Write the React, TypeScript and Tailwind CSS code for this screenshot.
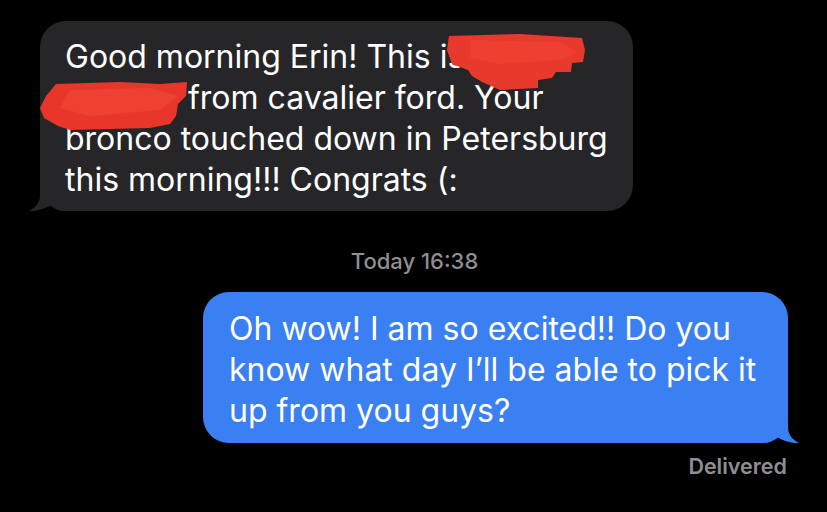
import React from 'react';

function Tail({ color, flip }: { color: string; flip?: boolean }) {
  return (
    <svg
      width="36"
      height="24"
      viewBox="0 0 36 24"
      className={flip ? 'absolute right-[-12px] bottom-0 -scale-x-100' : 'absolute left-[-12px] bottom-0'}
    >
      <path d="M12,0 L12,8 C12,16 7,21 1,24 C9,24.5 17,22 23,18 C26,21 30,24 36,24 L36,0 Z" fill={color} />
    </svg>
  );
}

function Scribbles() {
  // red marker over the sender's name
  return (
    <svg width="827" height="512" className="absolute inset-0 pointer-events-none">
      <path
        d="M449,36 L520,34 L582,38 L585,50 L583,62 L572,63 L571,72 L556,72 L552,78 L538,80 L538,88 L500,90 L482,82 L472,76 L468,70 L452,64 L447,50 Z"
        fill="#e83a2c"
      />
      <path d="M470,40 L560,42 L578,52 L560,60 L500,64 L470,58 Z" fill="#ef4333" opacity="0.7" />
      <path
        d="M56,84 L120,82 L160,84 L187,82 L186,96 L178,104 L176,116 L170,124 L150,128 L110,129 L70,130 L58,126 L44,118 L40,108 L46,96 Z"
        fill="#e8372a"
      />
      <path d="M70,90 L150,88 L178,96 L160,110 L90,116 L60,108 Z" fill="#f04a38" opacity="0.6" />
    </svg>
  );
}

export default function App() {
  return (
    <div className="relative w-[827px] h-[512px] overflow-hidden bg-black font-['Inter',sans-serif]">
      <div className="flex flex-col pt-[21px]">
        <div className="relative ml-[40px] w-[593px] rounded-[26px] bg-[#262628] px-[25px] pt-[15px] pb-[11px] text-[32px] leading-[41px] text-white">
          <Tail color="#262628" />
          <div className="relative">
            Good morning Erin! This is
            <br />
            <span className="inline-block w-[114px]" /> from cavalier ford. Your
            <br />
            bronco touched down in Petersburg
            <br />
            this morning!!! Congrats (:
          </div>
        </div>

        <div className="mt-[37px] text-center text-[22px] leading-[26px] font-medium text-[#8e8e93] pl-[2px]">
          Today 16:38
        </div>

        <div className="relative mt-[18px] ml-[203px] w-[585px] rounded-[26px] bg-[#3b80f2] px-[26px] pt-[16px] pb-[12px] text-[32px] leading-[41px] text-white">
          <Tail color="#3b80f2" flip />
          <div className="relative">
            Oh wow! I am so excited!! Do you
            <br />
            know what day I’ll be able to pick it
            <br />
            up from you guys?
          </div>
        </div>

        <div className="mt-[11px] pr-[40px] text-right text-[21.5px] leading-[24px] font-semibold text-[#8e8e93]">
          Delivered
        </div>
      </div>
      <Scribbles />
    </div>
  );
}
